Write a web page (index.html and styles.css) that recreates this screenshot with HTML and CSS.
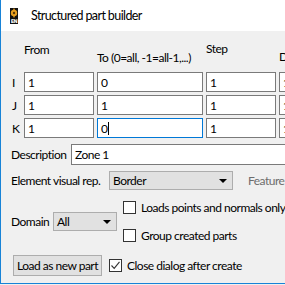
FILE: index.html
```html
<!DOCTYPE html>
<html>
<head>
<meta charset="utf-8">
<link rel="stylesheet" href="styles.css">
</head>
<body>
<div class="window">
  <div class="titlebar">
    <svg class="appicon" width="8" height="16" viewBox="0 0 8 16">
      <rect x="0" y="0" width="8" height="16" fill="#111"/>
      <circle cx="4" cy="5" r="3.2" fill="#e8a020"/>
      <circle cx="4" cy="5" r="1.2" fill="#5a3a08"/>
      <rect x="3.3" y="0.6" width="1.4" height="1.4" fill="#e8a020"/>
      <rect x="3.3" y="8" width="1.4" height="1.4" fill="#e8a020"/>
      <text x="4" y="15" font-size="5" font-family="DejaVu Sans" font-weight="bold" fill="#fff" text-anchor="middle">EN</text>
    </svg>
    <span class="title">Structured part builder</span>
  </div>
  <div class="content">
    <div class="ijk">
      <div></div>
      <div class="hdr h-from">From</div>
      <div class="hdr h-to">To (0=all, -1=all-1,...)</div>
      <div class="hdr h-step">Step</div>
      <div class="hdr h-de">Delta</div>

      <div class="rlabel">I</div>
      <div class="field">1</div>
      <div class="field">0</div>
      <div class="field">1</div>
      <div class="field">1</div>

      <div class="rlabel">J</div>
      <div class="field">1</div>
      <div class="field">1</div>
      <div class="field">1</div>
      <div class="field">1</div>

      <div class="rlabel">K</div>
      <div class="field">1</div>
      <div class="field focus">0<span class="caret"></span></div>
      <div class="field">1</div>
      <div class="field">1</div>
    </div>

    <div class="row desc-row">
      <span class="lbl lbl-desc">Description</span>
      <div class="field desc">Zone 1</div>
    </div>

    <div class="row elem-row">
      <span class="lbl lbl-elem">Element visual rep.</span>
      <div class="combo combo-border"><span>Border</span><span class="arrow"></span></div>
      <span class="disabled">Feature angle</span>
    </div>

    <div class="row mid-row">
      <span class="lbl lbl-domain">Domain</span>
      <div class="combo combo-all"><span>All</span><span class="arrow"></span></div>
      <div class="checks">
        <label class="check"><span class="box"></span><span>Loads points and normals only</span></label>
        <label class="check"><span class="box"></span><span>Group created parts</span></label>
      </div>
    </div>

    <div class="row bottom-row">
      <div class="button">Load as new part</div>
      <label class="check close"><span class="box checked"><svg width="11" height="11" viewBox="0 0 11 11"><path d="M1.5 5.5 L4.2 8.3 L9.5 1.8" fill="none" stroke="#333" stroke-width="1.1"/></svg></span><span>Close dialog after create</span></label>
    </div>
  </div>
</div>
</body>
</html>
```

FILE: styles.css
```css
html, body {
  margin: 0;
  padding: 0;
  width: 285px;
  height: 285px;
  overflow: hidden;
  background: #f0f0f0;
}
body {
  font-family: "Lato", "Noto Sans", sans-serif;
  font-size: 12px;
  letter-spacing: -0.5px;
  color: #000;
}
.window {
  width: 420px;
  height: 283px;
  border-left: 1px solid #1883d7;
  border-bottom: 1px solid #1883d7;
  background: #f0f0f0;
  display: flex;
  flex-direction: column;
}
.titlebar {
  height: 31px;
  background: #fff;
  display: flex;
  align-items: center;
  flex-shrink: 0;
}
.appicon {
  margin-left: 9px;
  margin-top: 1px;
}
.title {
  margin-left: 13px;
  font-size: 12.5px;
  letter-spacing: -0.6px;
  color: #000;
}
.content {
  display: flex;
  flex-direction: column;
}
.ijk {
  display: grid;
  grid-template-columns: 20px 70px 106px 70px 70px;
  grid-template-rows: 38px 20px 20px 20px;
  column-gap: 3px;
  row-gap: 3px;
}
.hdr { line-height: 15px; white-space: nowrap; }
.h-from { padding-top: 11px; }
.h-to { padding-top: 19px; }
.h-step { padding-top: 10px; }
.h-de { padding-top: 18px; }
.rlabel {
  padding-left: 11px;
  display: flex;
  align-items: center;
}
.field {
  box-sizing: border-box;
  height: 20px;
  border: 1px solid #7a7a7a;
  background: #fff;
  padding-left: 3px;
  display: flex;
  align-items: center;
  white-space: nowrap;
}
.field.focus { border-color: #0078d7; }
.caret {
  display: inline-block;
  width: 1px;
  height: 13px;
  background: #000;
  margin-left: 1px;
}
.row {
  display: flex;
  align-items: center;
  white-space: nowrap;
}
.lbl { padding-left: 10px; box-sizing: border-box; flex-shrink: 0; }
.lbl-desc { width: 70px; }
.lbl-elem { width: 108px; }
.lbl-domain { width: 52px; }
.desc-row { margin-top: 6px; }
.desc {
  height: 21px;
  width: 300px;
}
.elem-row { margin-top: 6px; }
.combo {
  box-sizing: border-box;
  height: 19px;
  background: #e1e1e1;
  border: 1px solid #adadad;
  display: flex;
  align-items: center;
  justify-content: space-between;
  padding-left: 3px;
  padding-right: 5px;
  flex-shrink: 0;
}
.combo-border { width: 124px; }
.arrow {
  width: 0;
  height: 0;
  border-left: 4px solid transparent;
  border-right: 4px solid transparent;
  border-top: 4px solid #000;
}
.disabled {
  color: #6d6d6d;
  margin-left: 15px;
}
.mid-row { margin-top: 10px; }
.combo-all { width: 64px; }
.checks {
  margin-left: 6px;
  display: flex;
  flex-direction: column;
  gap: 13px;
}
.check {
  display: flex;
  align-items: center;
  gap: 5px;
}
.box {
  box-sizing: border-box;
  width: 13px;
  height: 13px;
  border: 1px solid #333;
  background: #fff;
  display: flex;
  align-items: center;
  justify-content: center;
  flex-shrink: 0;
}
.bottom-row { margin-top: 12px; }
.button {
  box-sizing: border-box;
  margin-left: 12px;
  width: 89px;
  height: 21px;
  background: #e1e1e1;
  border: 1px solid #adadad;
  display: flex;
  align-items: center;
  justify-content: center;
  flex-shrink: 0;
}
.close { margin-left: 7px; }
```
